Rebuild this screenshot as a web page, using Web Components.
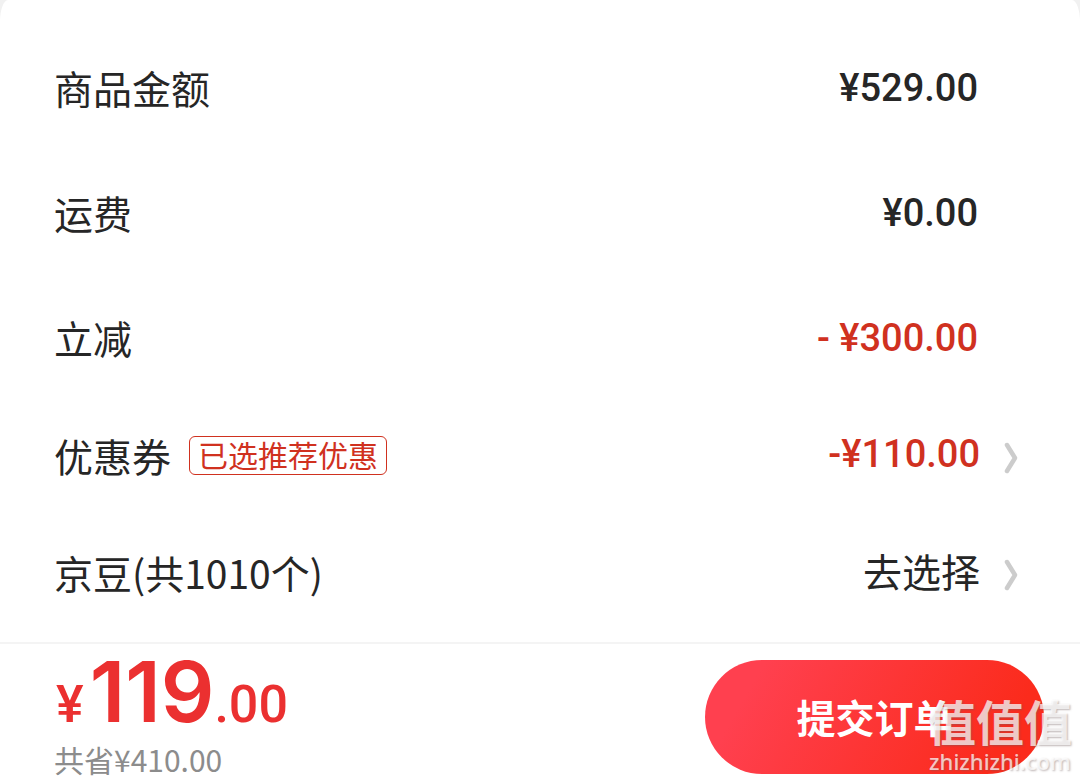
<!DOCTYPE html>
<html lang="zh-CN">
<head>
<meta charset="utf-8">
<meta name="viewport" content="width=device-width, initial-scale=1">
<title>提交订单</title>
<style>
html { background: #f1f1f1; }
body {
  margin: 0;
  font-family: "Noto Sans CJK SC", sans-serif;
  color: #262626;
  --price-font: Roboto, "Noto Sans CJK SC", sans-serif;
  --discount: #d0311f;
  --total: #eb3030;
}
</style>
</head>
<body>
<order-checkout>
  <fee-row label="商品金额"><price-text>¥529.00</price-text></fee-row>
  <fee-row label="运费"><price-text>¥0.00</price-text></fee-row>
  <fee-row label="立减"><price-text discount>- ¥300.00</price-text></fee-row>
  <fee-link label="优惠券"><coupon-tag slot="tag">已选推荐优惠</coupon-tag><price-text discount>-¥110.00</price-text></fee-link>
  <fee-link label="京豆(共1010个)">去选择</fee-link>
  <submit-bar slot="footer" whole="119" cents=".00" saved="共省¥410.00">提交订单</submit-bar>
</order-checkout>
<script>
class Base extends HTMLElement {
  constructor() {
    super();
    this.attachShadow({ mode: "open" }).innerHTML = this.constructor.markup.trim();
  }
  connectedCallback() {
    for (const part of this.shadowRoot.querySelectorAll("[data-from]")) {
      part.textContent = this.getAttribute(part.dataset.from);
    }
  }
}

customElements.define("order-checkout", class extends Base {
  static markup = `
    <style>
      :host { display: flex; flex-direction: column; min-height: 100vh; background: #fff; border-radius: 8px 8px 0 0 / 22px 22px 0 0; }
      main { flex: 1; display: flex; flex-direction: column; padding: 58px 0 40px; }
    </style>
    <main><slot></slot></main>
    <slot name="footer"></slot>`;
});

customElements.define("fee-row", class extends Base {
  static markup = `
    <style>
      :host { display: flex; justify-content: space-between; align-items: center; height: 58px; margin-bottom: 67px; padding: 0 102px 0 54px; font-size: 39px; line-height: 58px; }
      :host(:nth-of-type(3)) { margin-bottom: 60px; }
    </style>
    <span data-from="label"></span><slot></slot>`;
});

customElements.define("fee-link", class extends Base {
  static markup = `
    <style>
      :host { display: block; }
      :host(:first-of-type) { margin-bottom: 59px; }
      button { display: flex; align-items: center; width: 100%; height: 58px; padding: 0 62px 0 54px; border: 0; background: none; color: inherit; font: inherit; font-size: 39px; line-height: 58px; text-align: left; cursor: pointer; }
      .label { margin-right: 18px; }
      .value { margin: 0 24px 4px auto; }
      svg { display: block; width: 14px; height: 32px; margin-top: 6px; }
    </style>
    <button type="button">
      <span class="label" data-from="label"></span><slot name="tag"></slot>
      <span class="value"><slot></slot></span>
      <svg viewBox="0 0 14 32" fill="none" stroke="#ccc" stroke-width="4.5" stroke-linecap="round" stroke-linejoin="round" aria-hidden="true"><path d="M3 3 11 16 3 29"/></svg>
    </button>`;
});

customElements.define("price-text", class extends Base {
  static markup = `
    <style>
      :host { display: block; font-family: var(--price-font); font-size: 38px; font-weight: 500; line-height: 60px; white-space: nowrap; padding-top: 2px; }
      :host([discount]) { color: var(--discount); }
    </style>
    <slot></slot>`;
});

customElements.define("coupon-tag", class extends Base {
  static markup = `
    <style>
      :host { display: block; box-sizing: border-box; height: 39px; padding: 0 8px; border: 1px solid var(--discount); border-radius: 6px; color: var(--discount); font-size: 30px; line-height: 34px; }
    </style>
    <slot></slot>`;
});

customElements.define("submit-bar", class extends Base {
  static markup = `
    <style>
      :host { display: flex; justify-content: space-between; position: relative; box-sizing: border-box; height: 138px; padding: 16px 36px 6px 54px; border-top: 2px solid #f4f4f4; }
      .total { display: flex; align-items: baseline; height: 81px; padding-left: 2px; color: var(--total); font: 500 52px/64px var(--price-font); }
      .whole { margin-left: 6px; font-size: 84px; font-weight: 600; font-family: Inter, Roboto, sans-serif; }
      .saved { color: #8c8c8c; font-size: 30px; line-height: 36px; }
      button { width: 339px; height: 114px; padding: 0 0 2px; border: 0; border-radius: 57px; background: linear-gradient(120deg, #ff404f 15%, #fb2b1c 85%); color: #fff; font: 700 39px/58px "Noto Sans CJK SC", sans-serif; cursor: pointer; }
      site-mark { position: absolute; right: 8px; bottom: 8px; }
    </style>
    <div>
      <div class="total"><span>¥</span><span class="whole" data-from="whole"></span><span data-from="cents"></span></div>
      <div class="saved" data-from="saved"></div>
    </div>
    <button type="submit"><slot></slot></button>
    <site-mark></site-mark>`;
});

customElements.define("site-mark", class extends Base {
  static markup = `
    <style>
      :host { display: flex; flex-direction: column; align-items: center; pointer-events: none; color: rgba(255,255,255,.72); text-shadow: 1px 1px 2px rgba(110,90,90,.45); }
      .name { font-size: 48px; font-weight: 700; line-height: 60px; }
      .site { font: 500 22px/22px "Noto Sans", sans-serif; }
    </style>
    <span class="name">值值值</span>
    <span class="site">zhizhizhi.com</span>`;
});
</script>
</body>
</html>
